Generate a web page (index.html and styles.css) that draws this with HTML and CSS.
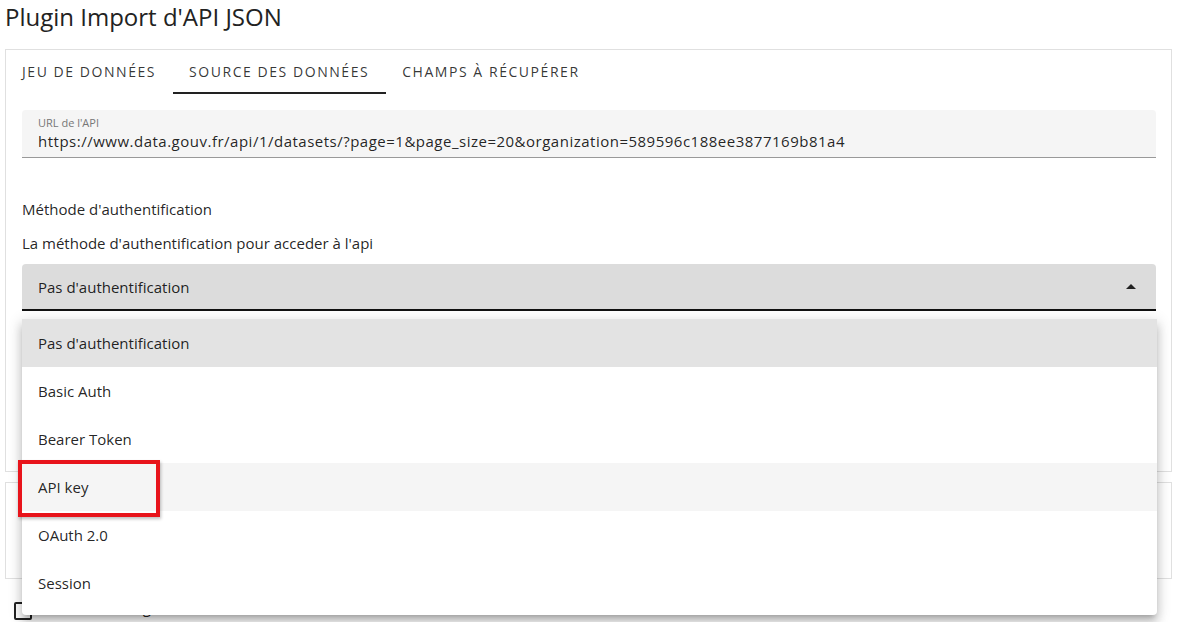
FILE: index.html
```html
<!DOCTYPE html>
<html lang="fr">
	<head>
		<meta charset="UTF-8" />
		<title>Plugin Import d'API JSON</title>
		<link rel="stylesheet" href="styles.css">
	</head>
	<body>
		<h1 class="title">Plugin Import d'API JSON</h1>

		<div class="card">
			<div class="tabs">
				<div class="tab">Jeu de données</div>
				<div class="tab active">Source des données</div>
				<div class="tab">Champs à récupérer</div>
			</div>

			<div class="card-body">
				<div class="field filled">
					<label class="field-label">URL de l'API</label>
					<div class="field-value">https://www.data.gouv.fr/api/1/datasets/?page=1&amp;page_size=20&amp;organization=589596c188ee3877169b81a4</div>
				</div>

				<p class="section-title">Méthode d'authentification</p>
				<p class="section-help">La méthode d'authentification pour acceder à l'api</p>

				<div class="select-wrap">
					<div class="select">
						<span>Pas d'authentification</span>
						<span class="caret"></span>
					</div>

					<ul class="menu">
						<li class="menu-item selected">Pas d'authentification</li>
						<li class="menu-item">Basic Auth</li>
						<li class="menu-item">Bearer Token</li>
						<li class="menu-item hover">API key<span class="highlight"></span></li>
						<li class="menu-item">OAuth 2.0</li>
						<li class="menu-item">Session</li>
					</ul>
				</div>

				<div class="spacer"></div>
			</div>
		</div>

		<div class="card card-small"></div>

		<label class="check-row">
			<span class="checkbox"></span>
			<span class="check-label">Activer le chargement</span>
		</label>
	</body>
</html>
```

FILE: styles.css
```css
* {
	box-sizing: border-box;
}

html,
body {
	margin: 0;
	background-color: #fff;
	font-family: "Open Sans", "Noto Sans", sans-serif;
	color: rgba(0, 0, 0, 0.87);
	overflow: hidden;
}

body {
	padding: 0 5px;
	height: 622px;
}

.title {
	margin: 0;
	padding-top: 2px;
	height: 49px;
	font-size: 24px;
	font-weight: 400;
	color: #222;
	line-height: 30px;
}

.card {
	border: 1px solid #e0e0e0;
}

.tabs {
	display: flex;
	height: 44px;
}

.tab {
	display: flex;
	align-items: center;
	padding: 0 17px 0 16px;
	font-size: 14px;
	letter-spacing: 1.55px;
	text-transform: uppercase;
	color: rgba(0, 0, 0, 0.8);
	border-bottom: 2px solid transparent;
}

.tab.active {
	border-bottom-color: #222;
}

.card-body {
	padding: 16px 15px 0 16px;
}

.field {
	background: #f5f5f5;
	border-bottom: 1px solid #999;
	border-radius: 4px 4px 0 0;
	height: 48px;
	padding: 6px 16px 0;
}

.field-label {
	display: block;
	font-size: 11px;
	line-height: 14px;
	color: #777;
}

.field-value {
	font-size: 15px;
	letter-spacing: 0.5px;
	line-height: 22px;
	white-space: nowrap;
}

.section-title {
	margin: 40px 0 0;
	font-size: 15px;
	line-height: 22px;
}

.section-help {
	margin: 12px 0 0;
	font-size: 15px;
	line-height: 22px;
}

.select-wrap {
	position: relative;
	margin-top: 10px;
}

.select {
	display: flex;
	justify-content: space-between;
	align-items: center;
	height: 47px;
	padding: 0 20px 0 16px;
	background: #dcdcdc;
	border-bottom: 2px solid #111;
	border-radius: 4px 4px 0 0;
	font-size: 15px;
}

.caret {
	width: 0;
	height: 0;
	border-left: 5px solid transparent;
	border-right: 5px solid transparent;
	border-bottom: 5px solid #222;
}

/* open dropdown list, drawn over the rest of the form */
.menu {
	position: absolute;
	top: 55px;
	left: 0;
	right: -1px;
	z-index: 2;
	margin: 0;
	padding: 0 0 8px;
	list-style: none;
	background: #fff;
	border-radius: 0 0 4px 4px;
	box-shadow: 0 5px 5px -3px rgba(0, 0, 0, 0.2), 0 8px 10px 1px rgba(0, 0, 0, 0.14), 0 3px 14px 2px rgba(0, 0, 0, 0.12);
}

.menu-item {
	position: relative;
	display: flex;
	align-items: center;
	height: 48px;
	padding: 0 16px;
	font-size: 15px;
}

.menu-item.selected {
	background: #e3e3e3;
}

.menu-item.hover {
	background: #f5f5f5;
}

.highlight {
	position: absolute;
	left: -4px;
	top: -3px;
	width: 142px;
	height: 57px;
	border: 4px solid #e8141b;
	box-shadow: 1px 2px 3px rgba(0, 0, 0, 0.25);
}

.spacer {
	height: 160px;
}

.card-small {
	margin-top: 10px;
	height: 97px;
}

.check-row {
	display: flex;
	align-items: flex-start;
	gap: 12px;
	margin-top: 23px;
	padding-left: 9px;
	font-size: 15px;
}

.checkbox {
	flex: none;
	width: 18px;
	height: 18px;
	border: 2px solid #222;
	border-radius: 2px;
}

.check-label {
	line-height: 18px;
	margin-top: -4px;
}
```
